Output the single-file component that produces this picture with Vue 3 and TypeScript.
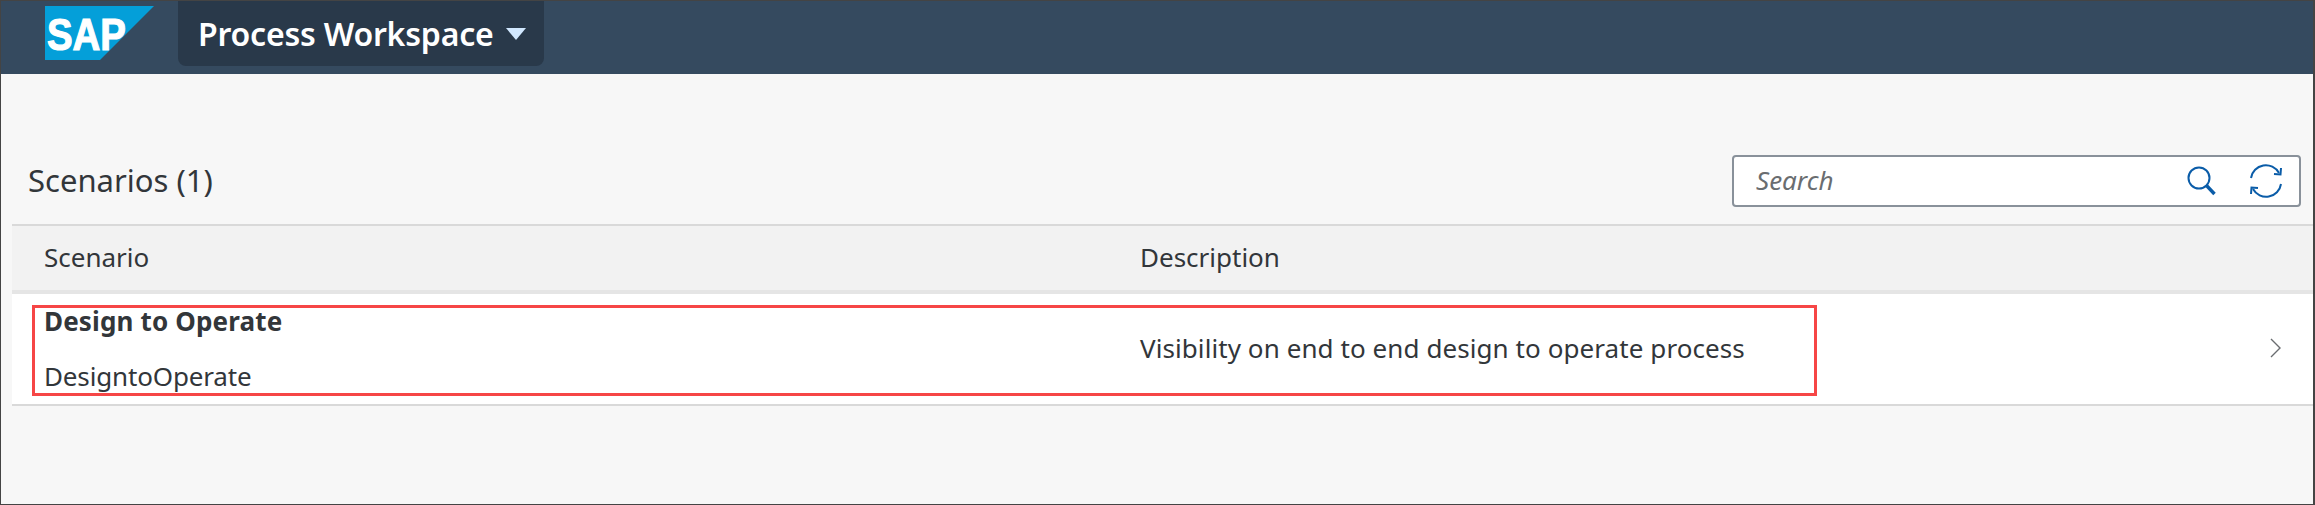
<script setup lang="ts">
import { ref } from 'vue'

interface Scenario {
  title: string
  id: string
  description: string
}

const search = ref('')
const scenarios = ref<Scenario[]>([
  {
    title: 'Design to Operate',
    id: 'DesigntoOperate',
    description: 'Visibility on end to end design to operate process'
  }
])
</script>

<template>
  <div class="page">
    <header class="shell">
      <svg class="logo" width="109" height="54" viewBox="0 0 109 54">
        <polygon points="0,0 109,0 55,54 0,54" fill="#049fd9" />
        <text x="2" y="44" class="logo-text" textLength="79" lengthAdjust="spacingAndGlyphs">SAP</text>
      </svg>
      <button class="menu-btn">
        <span>Process Workspace</span>
        <i class="caret"></i>
      </button>
    </header>

    <section class="toolbar">
      <h2 class="title">Scenarios ({{ scenarios.length }})</h2>
      <div class="search">
        <input v-model="search" type="text" placeholder="Search" />
        <svg class="icon-search" width="30" height="30" viewBox="0 0 30 30" fill="none" stroke="#0a5ca8">
          <circle cx="12" cy="12" r="10.5" stroke-width="2" />
          <path d="M19.5 19.5 L27.5 28" stroke-width="3.4" />
        </svg>
        <svg class="icon-refresh" width="34" height="34" viewBox="0 0 34 34" fill="none" stroke="#0a5ca8" stroke-width="2">
          <path d="M2 14 A15 15 0 0 1 30 9" />
          <path d="M32 4 L31.5 10.5 L25 10" />
          <path d="M32 20 A15 15 0 0 1 4 25" />
          <path d="M2 30 L2.5 23.5 L9 24" />
        </svg>
      </div>
    </section>

    <div class="table">
      <div class="table-head">
        <div class="col-one">Scenario</div>
        <div>Description</div>
      </div>
      <div v-for="item in scenarios" :key="item.id" class="table-row">
        <div class="col-one names">
          <strong>{{ item.title }}</strong>
          <span>{{ item.id }}</span>
        </div>
        <div class="desc">{{ item.description }}</div>
        <svg class="chevron" width="12" height="20" viewBox="0 0 12 20" fill="none" stroke="#6a6d70" stroke-width="1.4">
          <path d="M1 1 L10 10 L1 19" />
        </svg>
        <div class="highlight"></div>
      </div>
    </div>
  </div>
</template>

<style>
body {
  margin: 0;
}
</style>

<style scoped>
.page {
  box-sizing: border-box;
  width: 2315px;
  height: 505px;
  border: 1px solid #444;
  border-right-width: 2px;
  background: #f7f7f7;
  font-family: "Noto Sans", "Open Sans", sans-serif;
  color: #32363a;
  overflow: hidden;
}

.shell {
  display: flex;
  align-items: flex-start;
  height: 73px;
  padding-left: 44px;
  background: #354a5f;
}

.logo {
  margin-top: 5px;
  flex: none;
}

.logo-text {
  font-family: "Liberation Sans", sans-serif;
  font-size: 44px;
  font-weight: 700;
  fill: #fff;
  stroke: #fff;
  stroke-width: 1.2px;
}

.menu-btn {
  display: flex;
  align-items: center;
  gap: 12px;
  box-sizing: border-box;
  width: 366px;
  height: 65px;
  margin-left: 24px;
  padding: 0 0 0 20px;
  border: 0;
  border-radius: 0 0 8px 8px;
  background: #29394a;
  color: #fff;
  font-family: inherit;
  font-size: 32px;
  font-weight: 600;
  letter-spacing: -0.2px;
}

.caret {
  width: 0;
  height: 0;
  border-left: 10px solid transparent;
  border-right: 10px solid transparent;
  border-top: 12px solid #d1e8ff;
}

.toolbar {
  display: flex;
  align-items: center;
  justify-content: space-between;
  height: 150px;
  padding: 64px 12px 0 27px;
  box-sizing: border-box;
}

.title {
  margin: 0;
  padding-bottom: 2px;
  font-size: 31px;
  font-weight: 400;
}

.search {
  display: flex;
  align-items: center;
  box-sizing: border-box;
  width: 569px;
  height: 52px;
  padding: 0 16px 0 22px;
  background: #fff;
  border: 2px solid #89919a;
  border-radius: 4px;
}

.search input {
  flex: 1;
  min-width: 0;
  border: 0;
  outline: 0;
  padding: 0 0 2px;
  background: transparent;
  font-family: inherit;
  font-size: 26px;
  font-style: italic;
  color: #32363a;
}

.search input::placeholder {
  color: #6a6d70;
  opacity: 1;
}

.icon-refresh {
  margin-left: 32px;
}

.table {
  margin-left: 11px;
}

.table-head,
.table-row {
  display: grid;
  grid-template-columns: 1128px 1fr;
  align-items: center;
  font-size: 26px;
}

.table-head {
  box-sizing: border-box;
  height: 70px;
  padding-bottom: 2px;
  background: #f2f2f2;
  border-top: 2px solid #d9d9d9;
  border-bottom: 4px solid #e5e5e5;
}

.col-one {
  padding-left: 32px;
}

.table-row {
  position: relative;
  box-sizing: border-box;
  height: 112px;
  background: #fff;
  border-bottom: 2px solid #d9d9d9;
}

.names {
  display: flex;
  flex-direction: column;
  gap: 19px;
  line-height: 36px;
  padding-bottom: 1px;
}

.names strong {
  font-weight: 700;
  letter-spacing: 0.15px;
}

.names span {
  letter-spacing: -0.15px;
}

.desc {
  padding-bottom: 2px;
  letter-spacing: 0.08px;
}

.chevron {
  position: absolute;
  right: 31px;
  top: 44px;
}

.highlight {
  position: absolute;
  left: 20px;
  top: 11px;
  box-sizing: border-box;
  width: 1785px;
  height: 91px;
  border: 3px solid #f64646;
  pointer-events: none;
}
</style>
